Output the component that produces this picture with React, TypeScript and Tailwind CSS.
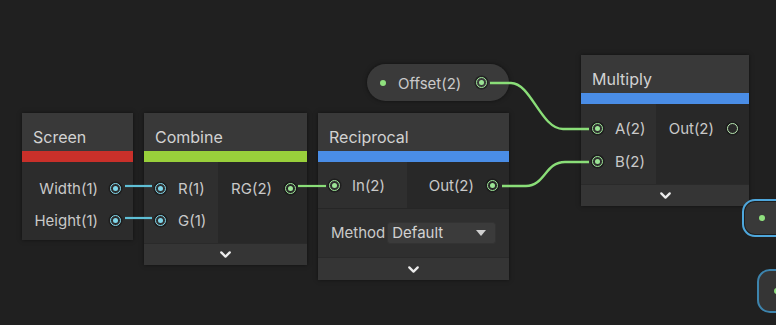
import { ChevronDown } from "lucide-react";

type PortKind = "cyan" | "green" | "hollow";

const Port = ({ kind }: { kind: PortKind }) => {
  const ring =
    kind === "cyan" ? "border-[#7fd6ea]" : kind === "green" ? "border-[#9ce596]" : "border-[#b7e6b0]";
  const dot = kind === "cyan" ? "bg-[#7fd6ea]" : "bg-[#9ce596]";
  return (
    <span className={`w-[11px] h-[11px] shrink-0 rounded-full border-[1.5px] ${ring} flex items-center justify-center shadow-[0_0_0_1.5px_rgba(20,20,20,0.6)]`}>
      {kind !== "hollow" && <span className={`w-[5px] h-[5px] rounded-full ${dot}`}></span>}
    </span>
  );
};

const Header = ({ title, bar }: { title: string; bar: string }) => (
  <>
    <div className="h-[38px] bg-[#393939] pl-[11px] pt-[13px] text-[16px] leading-[22px] text-[#d2d2d2]">{title}</div>
    <div className={`h-[11px] ${bar}`}></div>
  </>
);

const Footer = ({ h }: { h: string }) => (
  <div className={`${h} bg-[#353535] flex items-center justify-center border-t border-[#2a2a2a]`}>
    <ChevronDown size={17} strokeWidth={3.2} className="text-[#ececec]" />
  </div>
);

const InRow = ({ label, kind, h }: { label: string; kind: PortKind; h: string }) => (
  <div className={`${h} flex items-center pl-[11px] gap-[12px]`}>
    <Port kind={kind} />
    <span className="pt-[2px]">{label}</span>
  </div>
);

const OutRow = ({ label, kind, h }: { label: string; kind: PortKind; h: string }) => (
  <div className={`${h} flex items-center justify-end pr-[11px] gap-[13px]`}>
    <span className="pt-[2px]">{label}</span>
    <Port kind={kind} />
  </div>
);

export default function App() {
  return (
    <div
      className="relative w-[776px] h-[325px] overflow-hidden bg-[#202020] text-[15px] text-[#c9c9c9]"
      style={{ fontFamily: "Inter, 'Noto Sans', sans-serif" }}
    >
      {/* Screen */}
      <div className="absolute left-[22px] top-[113px] w-[111px] shadow-[0_0_4px_rgba(0,0,0,0.5)]">
        <Header title="Screen" bar="bg-[#c9302a]" />
        <div className="h-[78px] bg-[#2c2c2c] pt-[10px]">
          <div className="h-[32px] flex items-center justify-end pr-[12px] gap-[12px]">
            <span className="pt-[2px]">Width(1)</span>
            <Port kind="cyan" />
          </div>
          <div className="h-[32px] flex items-center justify-end pr-[12px] gap-[12px]">
            <span className="pt-[2px]">Height(1)</span>
            <Port kind="cyan" />
          </div>
        </div>
      </div>

      {/* Combine */}
      <div className="absolute left-[144px] top-[113px] w-[163px] shadow-[0_0_4px_rgba(0,0,0,0.5)]">
        <Header title="Combine" bar="bg-[#99d03b]" />
        <div className="flex h-[81px]">
          <div className="w-[74px] bg-[#2f2f2f] pt-[10px]">
            <InRow label="R(1)" kind="cyan" h="h-[32px]" />
            <InRow label="G(1)" kind="cyan" h="h-[32px]" />
          </div>
          <div className="flex-1 bg-[#282828] pt-[10px]">
            <OutRow label="RG(2)" kind="green" h="h-[32px]" />
          </div>
        </div>
        <Footer h="h-[22px]" />
      </div>

      {/* Reciprocal */}
      <div className="absolute left-[318px] top-[113px] w-[191px] shadow-[0_0_4px_rgba(0,0,0,0.5)]">
        <Header title="Reciprocal" bar="bg-[#4a8de6]" />
        <div className="flex h-[46px]">
          <div className="w-[89px] bg-[#2f2f2f]">
            <InRow label="In(2)" kind="green" h="h-[46px]" />
          </div>
          <div className="flex-1 bg-[#282828]">
            <OutRow label="Out(2)" kind="green" h="h-[46px]" />
          </div>
        </div>
        <div className="h-[49px] bg-[#2f2f2f] border-t border-[#262626] flex items-center pl-[13px] gap-[2px]">
          <span className="pt-[1px]">Method</span>
          <div className="w-[109px] h-[22px] rounded-[3px] bg-[#3b3b3b] border border-[#333] flex items-center justify-between pl-[4px] pr-[9px] text-[#d2d2d2]">
            <span className="pt-[1px]">Default</span>
            <span className="w-0 h-0 border-l-[5px] border-r-[5px] border-t-[6px] border-l-transparent border-r-transparent border-t-[#d0d0d0]"></span>
          </div>
        </div>
        <Footer h="h-[23px]" />
      </div>

      {/* Offset property */}
      <div className="absolute left-[367px] top-[64px] w-[142px] h-[37px] rounded-full bg-[#3a3a3a] flex items-center pl-[13px] pr-[22px] shadow-[0_0_4px_rgba(0,0,0,0.5)]">
        <span className="w-[6px] h-[6px] rounded-full bg-[#8fe07e]"></span>
        <span className="ml-[12px] flex-1 pt-[4px]">Offset(2)</span>
        <Port kind="green" />
      </div>

      {/* Multiply */}
      <div className="absolute left-[581px] top-[55px] w-[168px] shadow-[0_0_4px_rgba(0,0,0,0.5)]">
        <Header title="Multiply" bar="bg-[#4a8de6]" />
        <div className="flex h-[80px]">
          <div className="w-[75px] bg-[#2f2f2f] pt-[8px]">
            <InRow label="A(2)" kind="green" h="h-[33px]" />
            <InRow label="B(2)" kind="green" h="h-[33px]" />
          </div>
          <div className="flex-1 bg-[#282828] pt-[8px]">
            <OutRow label="Out(2)" kind="hollow" h="h-[33px]" />
          </div>
        </div>
        <Footer h="h-[22px]" />
      </div>

      {/* partially visible properties, bottom right */}
      <div className="absolute left-[742px] top-[199px] w-[80px] h-[38px] rounded-[13px] border-2 border-[#4ea7dc] bg-[#393939] flex items-center pl-[15px] shadow-[inset_0_0_0_1px_#1e1e1e]">
        <span className="w-[6px] h-[6px] rounded-full bg-[#8fe07e]"></span>
      </div>
      <div className="absolute left-[757px] top-[269px] w-[80px] h-[44px] rounded-[13px] border-2 border-[#3d84ad] bg-[#353535] flex items-center pl-[15px]">
        <span className="w-[6px] h-[6px] rounded-full bg-[#8fe07e]"></span>
      </div>

      {/* wires */}
      <svg className="absolute inset-0 pointer-events-none" width="776" height="325" viewBox="0 0 776 325" fill="none">
        <path d="M125 186 H152" stroke="#5fbfd6" strokeWidth="2.2" />
        <path d="M125 218 H152" stroke="#5fbfd6" strokeWidth="2.2" />
        <path d="M298 186 H326" stroke="#8ade78" strokeWidth="2.2" />
        <path d="M490 83 H511 C531 83 541 129 563 129 H589" stroke="#8ade78" strokeWidth="2.4" />
        <path d="M502 186 H526 C545 186 545 162 565 162 H589" stroke="#8ade78" strokeWidth="2.4" />
      </svg>
    </div>
  );
}
